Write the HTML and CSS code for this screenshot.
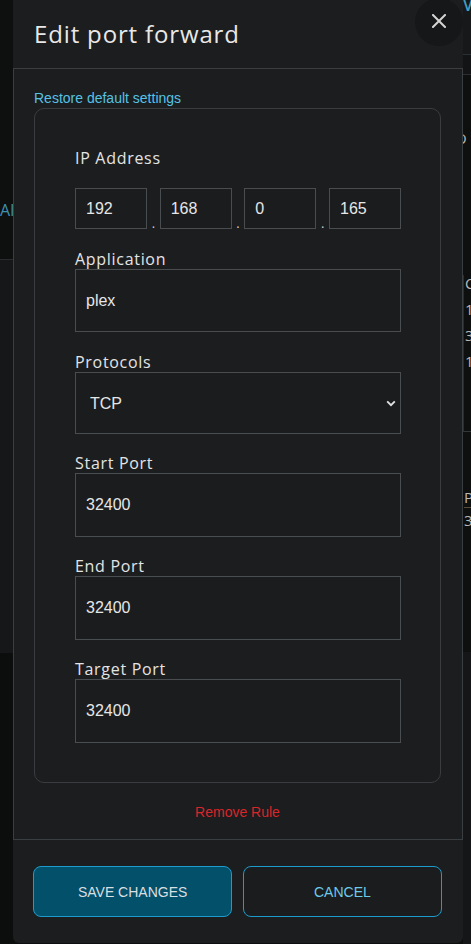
FILE: index.html
```html
<!DOCTYPE html>
<html lang="en">
<head>
<meta charset="utf-8">
<title>Edit port forward</title>
<link rel="stylesheet" href="styles.css">
</head>
<body>
<div class="page">
  <div class="bg-left">
    <div class="bg-l1"><span class="bg-a">AI</span></div>
    <div class="bg-l2"></div>
    <div class="bg-l3"></div>
  </div>
  <div class="bg-right">
    <div class="bg-r1"><span class="bg-v">V</span></div>
    <div class="bg-r2"></div>
    <div class="bg-r3"><span class="bg-ch d">O</span></div>
    <div class="bg-r4">
      <span class="bg-ch">C</span>
      <span class="bg-ch">1</span>
      <span class="bg-ch">3</span>
      <span class="bg-ch">1</span>
    </div>
    <div class="bg-r5"><span class="bg-ch p">P</span><span class="bg-ch">3</span></div>
    <div class="bg-r6"></div>
  </div>
</div>

<div class="modal">
  <div class="modal-header">
    <h1 class="modal-title">Edit port forward</h1>
    <button class="close-btn" aria-label="Close">
      <svg width="14" height="14" viewBox="0 0 14 14"><path d="M1 1L13 13M13 1L1 13" stroke="#d4d4d4" stroke-width="2" stroke-linecap="square"/></svg>
    </button>
  </div>
  <div class="modal-body">
    <a class="restore-link">Restore default settings</a>
    <div class="card">
      <div class="field ip">
        <label class="field-label">IP Address</label>
        <div class="ip-row">
          <input class="ip-input" value="192">
          <span class="ip-dot">.</span>
          <input class="ip-input" value="168">
          <span class="ip-dot">.</span>
          <input class="ip-input" value="0">
          <span class="ip-dot">.</span>
          <input class="ip-input" value="165">
        </div>
      </div>
      <div class="field app">
        <label class="field-label">Application</label>
        <input class="text-input app" value="plex">
      </div>
      <div class="field">
        <label class="field-label">Protocols</label>
        <div class="select-wrap">
          <select class="select-input"><option>TCP</option><option>UDP</option></select>
          <svg class="chev" width="10" height="7" viewBox="0 0 10 7"><path d="M1.2 1.3L5 5.1L8.8 1.3" stroke="#e0e0e0" stroke-width="1.9" fill="none"/></svg>
        </div>
      </div>
      <div class="field">
        <label class="field-label">Start Port</label>
        <input class="text-input" value="32400">
      </div>
      <div class="field">
        <label class="field-label">End Port</label>
        <input class="text-input" value="32400">
      </div>
      <div class="field last">
        <label class="field-label">Target Port</label>
        <input class="text-input" value="32400">
      </div>
    </div>
    <div class="remove-row"><a class="remove-link">Remove Rule</a></div>
  </div>
  <div class="modal-footer">
    <button class="btn btn-save">SAVE CHANGES</button>
    <button class="btn btn-cancel">CANCEL</button>
  </div>
</div>
</body>
</html>
```
FILE: styles.css
```css
* { box-sizing: border-box; }
html, body { margin: 0; padding: 0; }
body {
  width: 471px;
  height: 944px;
  overflow: hidden;
  background: #0c0e0e;
  font-family: "Liberation Sans", Arial, sans-serif;
  position: relative;
}
.page {
  display: flex;
  justify-content: space-between;
  height: 944px;
}
.bg-left { width: 13px; display: flex; flex-direction: column; overflow: hidden; }
.bg-l1 { height: 260px; background: #0e1010; border-bottom: 1px solid #2a2d2f; padding-top: 200px; }
.bg-a { display: block; color: #3f8fb0; font: 500 16px/20px "Open Sans", sans-serif; white-space: nowrap; }
.bg-l2 { height: 393px; background: #151719; }
.bg-l3 { flex: 1; background: #0c0e0e; }

.bg-right { width: 8px; display: flex; flex-direction: column; overflow: hidden; }
.bg-r1 { height: 55px; background: #16181a; border-bottom: 1px solid #2c2f31; overflow: hidden; }
.bg-v { display: block; margin-top: -6px; color: #3f9fc0; font: 600 16px "Open Sans", sans-serif; }
.bg-r2 { height: 20px; background: #121415; border-bottom: 1px solid #2c2f31; }
.bg-r3 { height: 200px; background: #0e1010; overflow: hidden; padding-top: 55px; }
.bg-r4 { height: 157px; background: #0e1010; border-left: 1px solid #2a2d2f; border-bottom: 1px solid #34373a; display: flex; flex-direction: column; gap: 9px; padding-top: 0; overflow: hidden; }
.bg-ch { display: block; color: #b8b8b8; font: 400 15px "Open Sans", sans-serif; line-height: 17px; margin-left: 1px; }
.bg-ch.d { margin-left: -8px; }
.bg-r5 { height: 220px; background: #0e1010; overflow: hidden; padding-top: 57px; }
.bg-ch.p { border-bottom: 1px solid #5a4a3a; padding-bottom: 1px; margin-bottom: 4px; }
.bg-r6 { flex: 1; background: #141617; }

.modal {
  position: absolute;
  left: 13px;
  top: 0;
  width: 450px;
  height: 943px;
  background: #1c1d1f;
  border-radius: 0 0 6px 6px;
  display: flex;
  flex-direction: column;
}
.modal-header {
  height: 68px;
  padding: 0 21px;
  position: relative;
}
.modal-title {
  margin: 0;
  padding-top: 18px;
  font-family: "Open Sans", sans-serif;
  font-weight: 500;
  font-size: 24px;
  line-height: 32px;
  color: #e8e8e8;
  letter-spacing: 0.85px;
}
.close-btn {
  position: absolute;
  right: 0;
  top: -2px;
  width: 48px;
  height: 48px;
  border-radius: 50%;
  border: none;
  background: #161718;
  display: flex;
  align-items: center;
  justify-content: center;
  padding: 0 0 2px 0;
}
.modal-body {
  height: 772px;
  border: 1px solid #3b3e41;
  padding: 20px 21px 0 20px;
  display: flex;
  flex-direction: column;
}
.restore-link {
  display: block;
  color: #55c2e6;
  font-size: 14px;
  line-height: 19px;
  cursor: pointer;
}
.card {
  border: 1px solid #3a3c3f;
  border-radius: 10px;
  padding: 39px 39px 39px 40px;
}
.field { display: flex; flex-direction: column; margin-bottom: 19px; }
.field.ip, .field.app { margin-bottom: 20px; }
.field.last { margin-bottom: 0; }
.field-label {
  font-family: "Open Sans", sans-serif;
  font-weight: 500;
  font-size: 16px;
  line-height: 20px;
  color: #e4e4e4;
  letter-spacing: 0.7px;
}
.ip-row { display: flex; margin-top: 20px; align-items: flex-end; }
.ip-input {
  width: 72px;
  height: 41px;
  background: #1b1c1e;
  border: 1px solid #4a4d50;
  border-radius: 0;
  color: #e6e6e6;
  font-family: "Liberation Sans", Arial, sans-serif;
  font-size: 16px;
  padding: 0 10px;
  outline: none;
}
.ip-dot {
  width: 12.7px;
  text-align: center;
  color: #cfcfcf;
  font-size: 14px;
  line-height: 10px;
  height: 10px;
  margin-bottom: 1px;
}
.text-input {
  width: 100%;
  height: 64px;
  background: #1b1c1e;
  border: 1px solid #4a4d50;
  border-radius: 0;
  color: #e6e6e6;
  font-family: "Liberation Sans", Arial, sans-serif;
  font-size: 16px;
  padding: 0 10px;
  outline: none;
}
.text-input.app { height: 63px; }
.select-wrap { position: relative; }
.select-input {
  appearance: none;
  -webkit-appearance: none;
  width: 100%;
  height: 62px;
  background: #1b1c1e;
  border: 1px solid #4a4d50;
  border-radius: 0;
  color: #e6e6e6;
  font-family: "Liberation Sans", Arial, sans-serif;
  font-size: 16px;
  padding: 0 14px;
  outline: none;
}
.chev { position: absolute; right: 5px; top: 28px; pointer-events: none; }
.remove-row {
  padding-top: 20px;
  text-align: center;
}
.remove-link {
  color: #d8262a;
  font-size: 14px;
  line-height: 18px;
  cursor: pointer;
}
.modal-footer {
  flex: 1;
  padding: 26px 21px 0 20px;
  display: flex;
  gap: 10.5px;
}
.btn {
  flex: 1;
  height: 51px;
  border-radius: 8px;
  border: 1px solid #1b9ccc;
  font-family: "Liberation Sans", Arial, sans-serif;
  font-size: 14px;
  cursor: pointer;
}
.btn-save { background: #03506a; color: #d9dfe2; }
.btn-cancel { background: #1b1c1e; color: #6ccbea; }
```
